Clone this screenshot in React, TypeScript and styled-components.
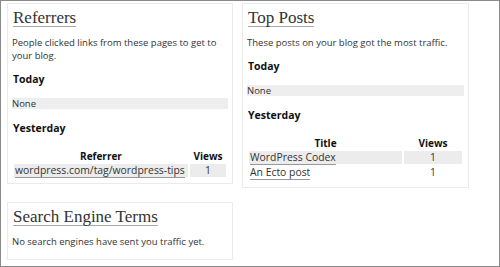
import styled, { createGlobalStyle } from 'styled-components';

const Global = createGlobalStyle`
	body {
		margin: 0;
		background: #fff;
		font-family: 'Open Sans', 'DejaVu Sans', sans-serif;
		color: #333;
	}
`;

interface Irow {
	label: string;
	views: number;
}

const referrers: Irow[] = [{ label: 'wordpress.com/tag/wordpress-tips', views: 1 }];
const posts: Irow[] = [
	{ label: 'WordPress Codex', views: 1 },
	{ label: 'An Ecto post', views: 1 },
];

const StatsTable = ({ head, rows, viewsWidth }: { head: string; rows: Irow[]; viewsWidth: number }) => (
	<Table>
		<thead>
			<tr>
				<Th>{head}</Th>
				<Th $width={viewsWidth}>Views</Th>
			</tr>
		</thead>
		<tbody>
			{rows.map((r, i) => (
				<tr key={r.label}>
					<Td $shade={i % 2 === 0}>
						<Link>{r.label}</Link>
					</Td>
					<Td $shade={i % 2 === 0} $center>
						{r.views}
					</Td>
				</tr>
			))}
		</tbody>
	</Table>
);

export default function App() {
	return (
		<>
			<Global />
			<Frame>
				<Column>
					<Card>
						<Heading>Referrers</Heading>
						<Text>People clicked links from these pages to get to your blog.</Text>
						<Sub>Today</Sub>
						<Empty>None</Empty>
						<Sub>Yesterday</Sub>
						<StatsTable head='Referrer' rows={referrers} viewsWidth={36} />
					</Card>
					<Card $bottom={11}>
						<Heading>Search Engine Terms</Heading>
						<Text>No search engines have sent you traffic yet.</Text>
					</Card>
				</Column>
				<Column>
					<Card $bottom={6}>
						<Heading>Top Posts</Heading>
						<Text>These posts on your blog got the most traffic.</Text>
						<Sub>Today</Sub>
						<Empty>None</Empty>
						<Sub>Yesterday</Sub>
						<StatsTable head='Title' rows={posts} viewsWidth={58} />
					</Card>
				</Column>
			</Frame>
		</>
	);
}

const Frame = styled.div`
	width: 500px;
	height: 267px;
	box-sizing: border-box;
	border: 1px solid #8a8a8a;
	padding: 2px 0 0 6px;
	display: grid;
	grid-template-columns: 226px 227px;
	column-gap: 9px;
	align-items: start;
`;

const Column = styled.div`
	display: flex;
	flex-direction: column;
	gap: 18px;
`;

const Card = styled.div<{ $bottom?: number }>`
	border: 1px solid #ebebeb;
	padding: 5px 4px ${(p) => p.$bottom ?? 4}px 4px;
	display: flex;
	flex-direction: column;
	align-items: flex-start;
`;

const Heading = styled.h2`
	margin: 0 0 0 1px;
	font-family: 'Liberation Serif', serif;
	font-weight: normal;
	font-size: 17px;
	line-height: 17px;
	color: #333;
	border-bottom: 1px solid #a8a8a8;
`;

const Text = styled.p`
	margin: 9px 0 0;
	font-size: 9.5px;
	line-height: 13px;
`;

const Sub = styled.h3`
	margin: 10px 0 0 1px;
	font-size: 10.5px;
	line-height: 14px;
	font-weight: bold;
	color: #111;
`;

const Empty = styled.div`
	align-self: stretch;
	margin: 12px 0;
	background: #eee;
	font-size: 9.5px;
	line-height: 11px;
	& + h3 {
		margin-top: 0;
	}
`;

const Table = styled.table`
	align-self: stretch;
	margin-top: 12.5px;
	border-collapse: separate;
	border-spacing: 2px;
	font-size: 10.4px;
	color: #333;
`;

const Th = styled.th<{ $width?: number }>`
	width: ${(p) => (p.$width ? `${p.$width}px` : 'auto')};
	font-size: 10px;
	font-weight: bold;
	color: #111;
	padding: 0;
	line-height: 12px;
`;

const Td = styled.td<{ $shade?: boolean; $center?: boolean }>`
	background: ${(p) => (p.$shade ? '#ececec' : 'transparent')};
	text-align: ${(p) => (p.$center ? 'center' : 'left')};
	padding: 0 1px;
	height: 13px;
	line-height: 12px;
`;

const Link = styled.span`
	border-bottom: 1px solid #999;
`;
